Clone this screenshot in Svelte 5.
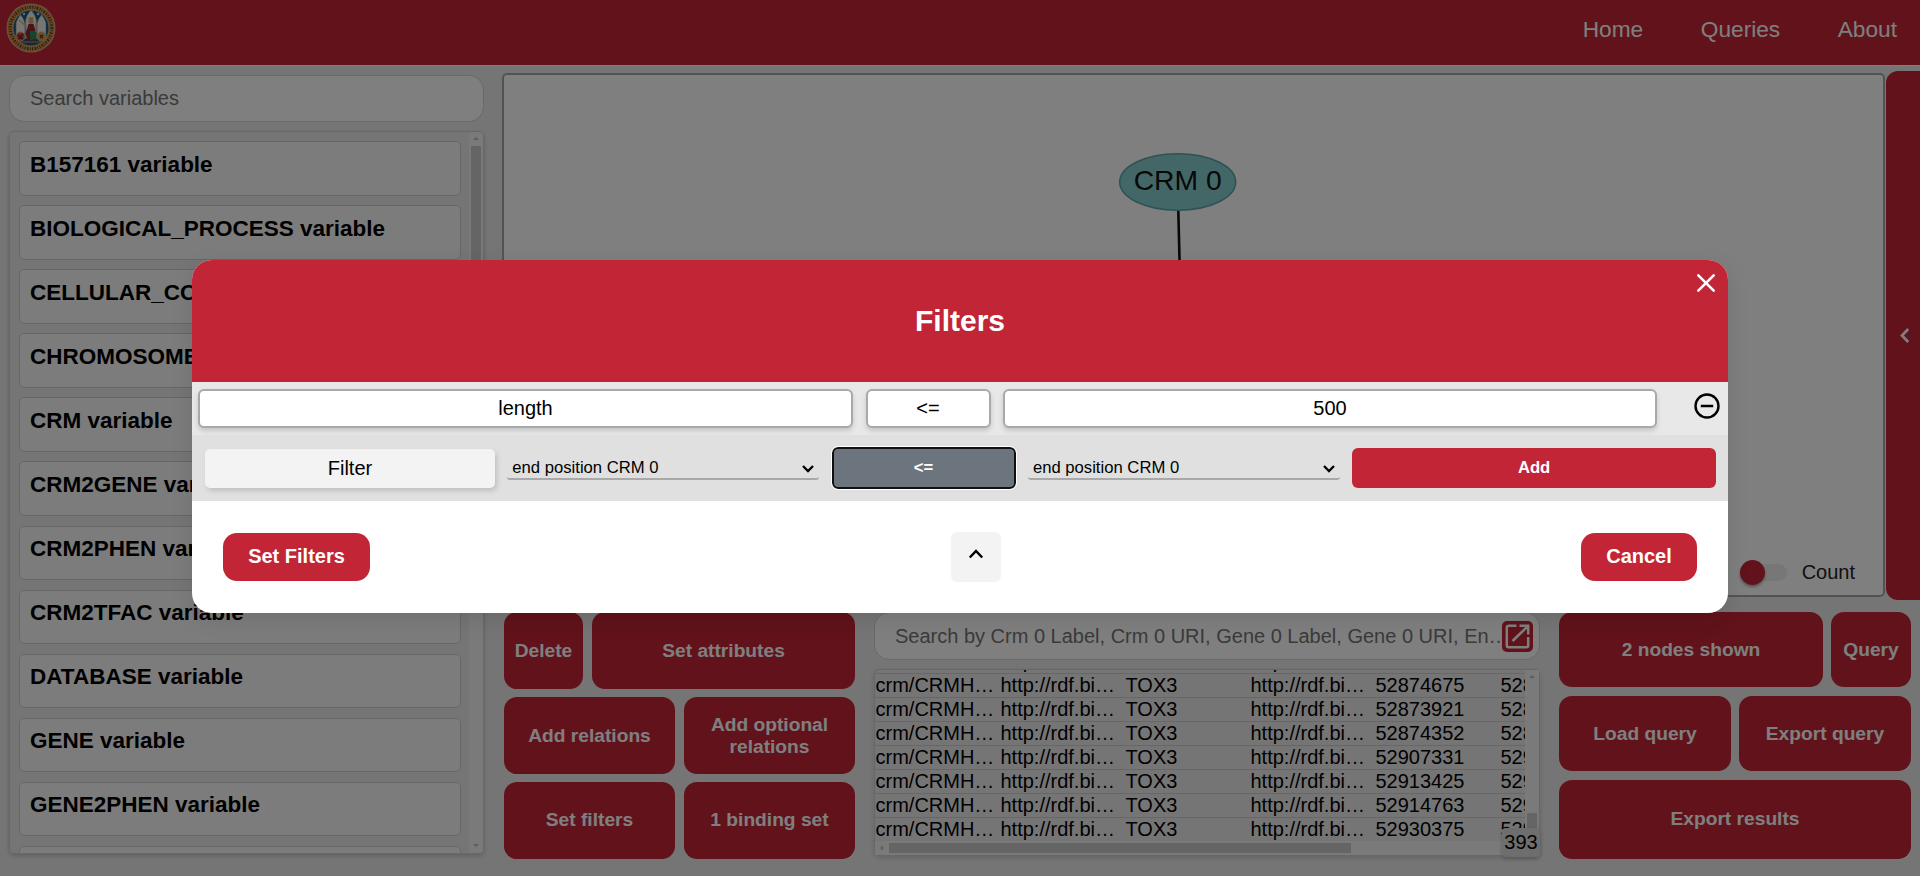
<script>
  const nav = ['Home', 'Queries', 'About'];
  const variables = [
    'B157161', 'BIOLOGICAL_PROCESS', 'CELLULAR_COMPONENT', 'CHROMOSOME', 'CRM', 'CRM2GENE',
    'CRM2PHEN', 'CRM2TFAC', 'DATABASE', 'GENE', 'GENE2PHEN'
  ];
  const positions = ['52874412', '52874675', '52873921', '52874352', '52907331', '52913425', '52914763', '52930375'];
  const ends = ['52874998', '52874998', '52874210', '52874771', '52907766', '52913790', '52914982', '52930699'];
  const rows = positions.map((p, i) => ['crm/CRMH…', 'http://rdf.bi…', 'TOX3', 'http://rdf.bi…', p, ends[i]]);
</script>

<div class="page">
  <header>
    <svg class="logo" viewBox="0 0 50 50" width="50" height="50">
      <circle cx="25" cy="25" r="24.5" fill="#c9b09a" />
      <circle cx="25" cy="25" r="23.6" fill="#d08a42" />
      <circle cx="25" cy="25" r="20.800" fill="none" stroke="#4a3420" stroke-width="3" stroke-dasharray=".9 1.600 .6 1.500 1.200 1.800" />
      <circle cx="25" cy="25" r="18" fill="#0d5a86" stroke="#e0c8a0" stroke-width=".7" />
      <path d="M10 34V20q1-4 4.500-8.500Q18 16 19 20q1-8 6-13 5 5 6 13 1-4 4.500-8.500Q39 16 40 20v14q-15 3-30 0z" fill="#efece8" stroke="#8e8a80" stroke-width=".6" />
      <path d="M19.200 18v16M30.800 18v16" stroke="#7d786c" stroke-width="1" />
      <circle cx="18" cy="11" r="1.300" fill="#bcd0d8" /><circle cx="32" cy="11" r="1.300" fill="#bcd0d8" />
      <path d="M22.500 21h5l3 9-2 8h-7l-2-8z" fill="#8c2a34" />
      <path d="M24 28h6l1 8-7 1z" fill="#2c8a58" />
      <circle cx="25" cy="18.500" r="2.600" fill="#d9a878" /><path d="M22.400 16.500h5.200l-.6-2h-4z" fill="#d9a030" />
      <path d="M13 17l9 8M30 20v9" stroke="#d9b080" stroke-width="1.200" />
      <circle cx="14.500" cy="33.500" r="4.600" fill="#c4514a" stroke="#dbb58a" stroke-width="1" />
      <path d="M12 32l5 4M17 31l-4 5" stroke="#6e1420" stroke-width="1.300" />
      <circle cx="35.500" cy="33.500" r="4.600" fill="#cf9950" stroke="#dbb58a" stroke-width="1" />
      <path d="M34 32l3 3M37 32l-3 3" stroke="#5f3c1c" stroke-width="1.300" />
      <path d="M12 39h26" stroke="#b98a4a" stroke-width="1.200" />
    </svg>
    <nav>{#each nav as n}<span>{n}</span>{/each}</nav>
  </header>

  <main>
    <aside>
      <div class="search">Search variables</div>
      <div class="list">
        <div class="items">
          {#each variables as v}<div class="item">{v} variable</div>{/each}
          <div class="item"></div>
        </div>
        <div class="vbar"><i class="up"></i><b class="long"></b><i class="down"></i></div>
      </div>
    </aside>

    <section>
      <div class="stage">
        <div class="canvas">
          <svg width="1379" height="520" viewBox="504 75 1379 520">
            <line x1="1178.300" y1="210" x2="1180.500" y2="300" stroke="#101010" stroke-width="2.600" />
            <ellipse cx="1177.700" cy="182" rx="58" ry="28.300" fill="#86cdcd" stroke="#5fa3a3" stroke-width="1.500" />
            <text x="1177.700" y="190" text-anchor="middle" font-size="28.300" fill="#101010">CRM 0</text>
          </svg>
          <div class="count"><span class="track"><span class="knob"></span></span>Count</div>
        </div>
        <div class="drawer">
          <svg width="12" height="18" viewBox="0 0 12 18"><path d="M9.200 2L3 8.500l6.200 6.500" fill="none" stroke="#fff" stroke-width="2.700" /></svg>
        </div>
      </div>

      <div class="bottom">
        <div class="grid left">
          <div class="row"><div class="btn" style="flex:0 0 79px">Delete</div><div class="btn">Set attributes</div></div>
          <div class="row"><div class="btn">Add relations</div><div class="btn">Add optional<br />relations</div></div>
          <div class="row last"><div class="btn">Set filters</div><div class="btn">1 binding set</div></div>
        </div>

        <div class="results">
          <div class="search wide">
            <span>Search by Crm 0 Label, Crm 0 URI, Gene 0 Label, Gene 0 URI, En…</span>
            <div class="open">
              <svg width="31" height="31" viewBox="0 0 31 31" fill="none" stroke="#fff" stroke-width="2.500">
                <path d="M14.500 4.800H6.500Q4.800 4.800 4.800 6.500v18q0 1.700 1.700 1.700h18q1.700 0 1.700-1.700V16" />
                <path d="M17.500 4.800h8.700v8.700M26 5L10.500 20" />
              </svg>
            </div>
          </div>
          <div class="table">
            <div class="tmain">
              <div class="tclip">
                <div class="trows">
                  {#each rows as r}<div class="tr">{#each r as c}<span>{c}</span>{/each}</div>{/each}
                </div>
              </div>
              <div class="vbar"><i class="up"></i><b class="short"></b></div>
            </div>
            <div class="hbar"><i></i><b></b></div>
            <div class="total">393</div>
          </div>
        </div>

        <div class="grid right">
          <div class="row"><div class="btn">2 nodes shown</div><div class="btn" style="flex:0 0 80px">Query</div></div>
          <div class="row"><div class="btn">Load query</div><div class="btn">Export query</div></div>
          <div class="row last"><div class="btn">Export results</div></div>
        </div>
      </div>
    </section>
  </main>

  <div class="overlay">
    <div class="modal">
      <div class="title">
        Filters
        <svg class="close" width="20" height="20" viewBox="0 0 20 20"><path d="M2.300 2.300l15.400 15.400M17.700 2.300L2.300 17.700" stroke="#fff" stroke-width="2.600" stroke-linecap="round" /></svg>
      </div>
      <div class="set">
        <div class="field" style="width:655px">length</div>
        <div class="field" style="width:125px">&lt;=</div>
        <div class="field" style="width:654px">500</div>
        <svg class="minus" width="26" height="26" viewBox="0 0 26 26" fill="none" stroke="#000" stroke-width="2.400"><circle cx="13" cy="13" r="11.500" /><path d="M6.800 13h12.400" /></svg>
      </div>
      <div class="new">
        <div class="kind">Filter</div>
        {#snippet select()}
          <div class="select">end position CRM 0
            <svg width="14" height="10" viewBox="0 0 14 10"><path d="M2 2l5 5 5-5" fill="none" stroke="#000" stroke-width="2.300" /></svg>
          </div>
        {/snippet}
        {@render select()}
        <div class="op">&lt;=</div>
        {@render select()}
        <div class="add">Add</div>
      </div>
      <div class="foot">
        <div class="act" style="width:147px">Set Filters</div>
        <div class="fold"><svg width="16" height="12" viewBox="0 0 16 12"><path d="M1.800 9.500L8 3l6.200 6.500" fill="none" stroke="#000" stroke-width="2.500" /></svg></div>
        <div class="act" style="width:116px">Cancel</div>
      </div>
    </div>
  </div>
</div>

<style>
  :global(body) { margin: 0; }
  .page, .page * { box-sizing: border-box; }
  .page { position: relative; width: 1920px; height: 876px; overflow: hidden; background: #ebebeb; font: 20px "Liberation Sans", Arial, sans-serif; color: #000; }
  svg { display: block; flex: none; }
  header { height: 65px; background: #c22535; display: flex; justify-content: space-between; padding: 3px 23px 0 6px; }
  nav { display: flex; gap: 57.500px; height: 53px; align-items: center; color: #fff; font-size: 22.700px; }
  main { display: flex; height: 811px; border-top: 1px solid #fff; }
  aside { width: 502px; padding: 9px 0 0 9px; }
  .search { width: 475px; height: 47px; border: 1px solid #d2d2d2; border-radius: 15px; background: #fff; color: #757575; line-height: 45px; padding-left: 20px; white-space: nowrap; }
  .list { margin-top: 9px; width: 475px; height: 723px; border: 1px solid #d0d0d0; border-radius: 5px; display: flex; overflow: hidden; box-shadow: 0 2px 5px rgba(0, 0, 0, .18); }
  .items { flex: 1; padding: 9px 8px 0 9px; overflow: hidden; }
  .item { width: 442px; height: 54.5px; margin-bottom: 9.600px; border: 1px solid #cfcfcf; border-radius: 5px; background: #f9f9f9; font-weight: bold; font-size: 22.500px; line-height: 26px; padding: 9.500px 0 0 10px; white-space: nowrap; }
  .vbar { width: 14px; background: #f5f5f5; display: flex; flex-direction: column; align-items: center; }
  .vbar i { width: 0; height: 0; border: 3px solid transparent; }
  .up { border-bottom-color: #bbb !important; margin: 2px 0 6px; }
  .down { border-top-color: #bbb !important; margin: auto 0 3px; }
  .vbar b { width: 10px; background: #cacaca; }
  .long { height: 330px; }
  .short { height: 15px; margin-top: 129px; }
  section { width: 1418px; padding-top: 5px; display: flex; flex-direction: column; gap: 12px; }
  .stage { display: flex; justify-content: space-between; height: 529px; }
  .canvas { position: relative; width: 1383px; height: 524px; margin-top: 2px; border: 2px solid #a6a6a6; border-radius: 5px; background: #fff; }
  .count { position: absolute; right: 28px; bottom: 11px; display: flex; align-items: center; gap: 15px; line-height: 24px; color: #222; }
  .track { position: relative; width: 41px; height: 17px; border-radius: 9px; background: #efefef; }
  .knob { position: absolute; left: -6px; top: -4px; width: 25px; height: 25px; border-radius: 50%; background: #c22535; box-shadow: 0 2px 3px rgba(0, 0, 0, .35); }
  .drawer { width: 34px; height: 529px; border-radius: 12px 0 0 12px; background: #c22535; display: flex; align-items: center; padding-left: 13px; }
  .bottom { display: flex; gap: 19px; padding-left: 2px; }
  .grid { display: flex; flex-direction: column; gap: 8px; height: 247px; }
  .left { width: 351px; }
  .right { width: 352px; display: grid; grid-template-rows: 75px 75px 79px; gap: 9px; }
  .row { display: flex; gap: 9px; flex: 1; }
  .right .row { gap: 8px; }
  .btn { flex: 1; border-radius: 13px; background: #c22535; color: #fff; font-weight: bold; font-size: 19.2px; line-height: 22px; text-align: center; display: flex; align-items: center; justify-content: center; }
  .last .btn { padding-bottom: 2px; }
  .results { width: 666px; }
  .wide { width: 666px; height: 48px; display: flex; align-items: center; justify-content: space-between; padding-right: 6px; }
  .wide span { width: 607px; overflow: hidden; }
  .open { flex: none; width: 31px; height: 31px; border-radius: 5px; background: #c22535; }
  .table { position: relative; margin-top: 9px; height: 187px; border: 1px solid #cfcfcf; border-radius: 5px; box-shadow: 0 2px 5px rgba(0, 0, 0, .15); }
  .tmain { display: flex; height: 171px; }
  .tclip { width: 650px; overflow: hidden; }
  .trows { margin-top: -20px; width: 760px; }
  .tr { display: flex; height: 24px; border-bottom: 1px solid #cfcfcf; line-height: 22px; padding-left: .5px; }
  .tr span { width: 125px; flex: none; }
  .hbar { height: 14px; background: #f5f5f5; display: flex; align-items: center; gap: 6px; }
  .hbar i { border: 3px solid transparent; border-right-color: #bbb; margin-left: 2px; }
  .hbar b { width: 462px; height: 10px; background: #cacaca; }
  .total { position: absolute; right: -1px; bottom: -2px; width: 38px; height: 29px; border-radius: 4px; background: #dcdcdc; line-height: 28px; text-align: center; box-shadow: 0 2px 4px rgba(0, 0, 0, .2); }
  .overlay { position: absolute; inset: 0; background: rgba(0, 0, 0, .5); padding: 260px 0 0 192px; }
  .modal { width: 1536px; height: 353px; border-radius: 20px; background: #fff; overflow: hidden; box-shadow: 0 6px 22px rgba(0, 0, 0, .1); }
  .title { position: relative; height: 122px; background: #c22535; color: #fff; font-weight: bold; font-size: 30px; line-height: 121px; text-align: center; }
  .close { position: absolute; right: 12px; top: 13px; }
  .set { height: 53px; background: #e8e8e8; display: flex; gap: 12.500px; padding: 7px 0 0 6px; }
  .field { height: 39px; border: 2px solid #a9a9a9; border-radius: 6px; background: #fff; line-height: 35px; text-align: center; box-shadow: 0 3px 5px rgba(0, 0, 0, .15); }
  .minus { margin: 4px 0 0 24.500px; }
  .new { height: 66px; background: #e0e0e0; display: flex; align-items: center; gap: 12.300px; padding: 0 12px 0 13px; font-size: 16.67px; }
  .kind { width: 290px; height: 39px; border-radius: 5px; background: #f3f3f3; font-size: 20px; line-height: 38px; text-align: center; box-shadow: 2px 3px 5px rgba(0, 0, 0, .14); }
  .select { width: 312px; height: 23px; border-bottom: 2px solid #a9a9a9; border-radius: 3px; line-height: 21px; padding: 0 4px 0 5px; display: flex; justify-content: space-between; }
  .select svg { margin-top: 7px; }
  .op { width: 184px; height: 42px; border: 2px solid #101010; outline: 1px solid #fff; border-radius: 6px; background: #6c757d; color: #fff; font-weight: bold; line-height: 38px; text-align: center; }
  .add { flex: 1; height: 40px; border-radius: 6px; background: #c22535; color: #fff; font-weight: bold; line-height: 39px; text-align: center; }
  .foot { height: 112px; display: flex; align-items: center; justify-content: space-between; padding: 0 31px; }
  .act { height: 48px; border-radius: 14px; background: #c22535; color: #fff; font-weight: bold; line-height: 46px; text-align: center; }
  .fold { width: 50px; height: 50px; border-radius: 6px; background: #f3f3f3; padding: 16px 17px; }
</style>
